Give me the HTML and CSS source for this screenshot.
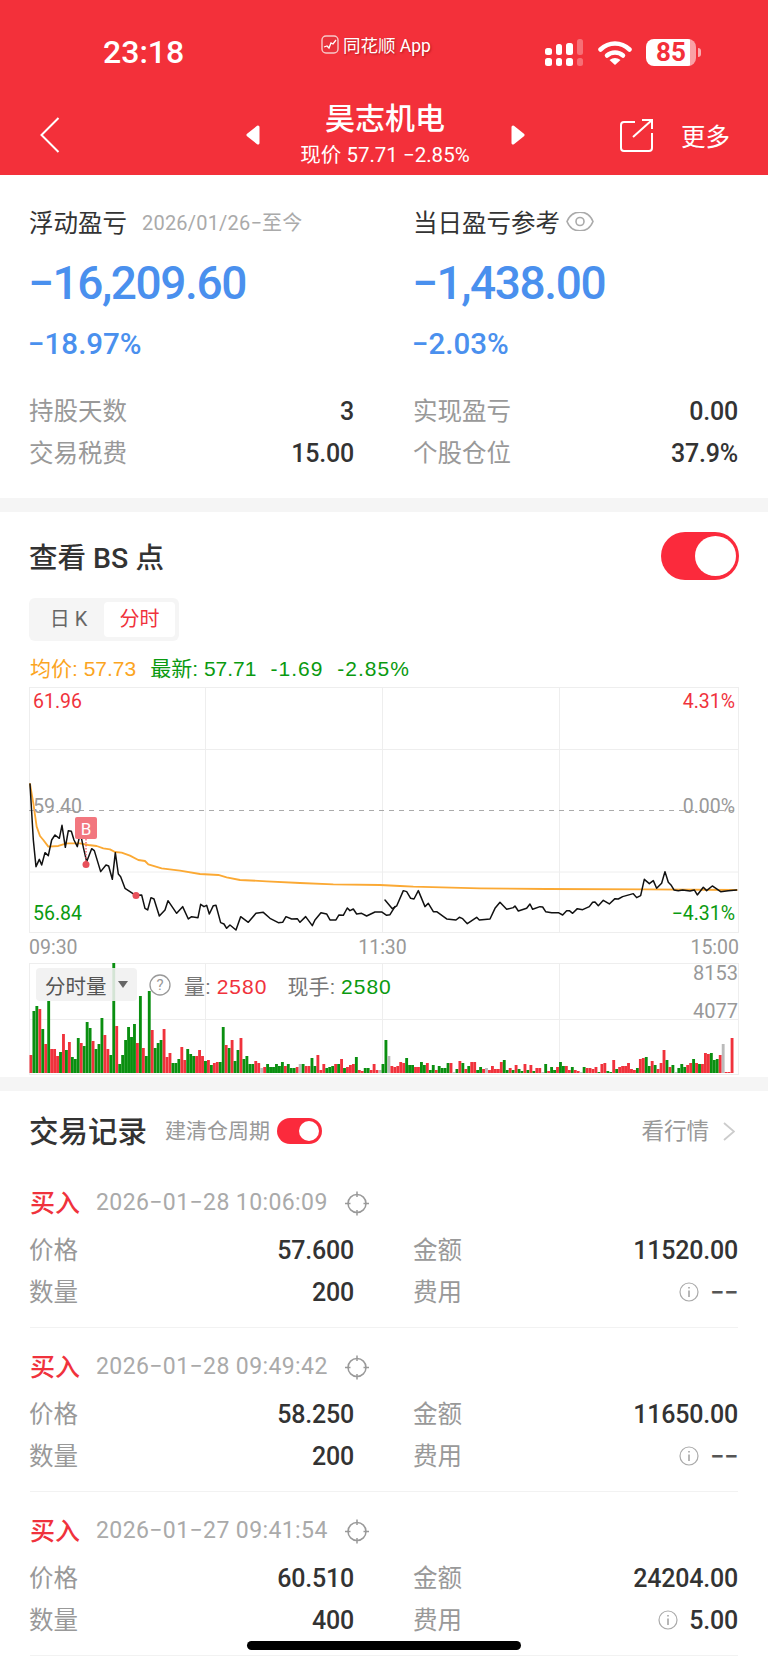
FILE: index.html
```html
<!DOCTYPE html>
<html lang="zh-CN">
<head>
    <meta charset="UTF-8">
    <meta name="viewport" content="width=device-width, initial-scale=1.0">
    <title>昊志机电</title>
    <link rel="stylesheet" href="styles.css">
</head>
<body>
<svg class="defs" width="0" height="0">
    <symbol id="icon-target" viewBox="0 0 24 25">
        <circle cx="12" cy="12.5" r="9" fill="none" stroke="#999" stroke-width="1.5"/>
        <path d="M12 0.5V6M12 19V24.5M0 12.5H5.5M18.5 12.5H24" fill="none" stroke="#999" stroke-width="1.5"/>
    </symbol>
    <symbol id="icon-info" viewBox="0 0 20 20">
        <circle cx="10" cy="10" r="9" fill="none" stroke="#aaa" stroke-width="1.2"/>
        <path d="M10 8.5V15M10 5V6.5" fill="none" stroke="#999" stroke-width="1.4"/>
    </symbol>
</svg>

<div class="page">
    <header class="top">
        <div class="status">
            <span class="clock">23:18</span>
            <span class="app-label">
                <svg class="app-icon" width="18" height="19" viewBox="0 0 18 19">
                    <rect x="1" y="1" width="16" height="17" rx="4" fill="#e8323c" stroke="#f8c8c8" stroke-width="1.4"/>
                    <path d="M3 12L6 11L8 13L10 8L12 9L15 5" fill="none" stroke="#fff" stroke-width="1.3"/>
                </svg>
                同花顺 App
            </span>
            <div class="status-icons">
                <div class="signal">
                    <div class="sig-col"><i class="s1"></i><i></i></div>
                    <div class="sig-col"><i class="s2"></i><i></i></div>
                    <div class="sig-col"><i class="s3"></i><i></i></div>
                    <div class="sig-col faded"><i class="s4"></i><i></i></div>
                </div>
                <svg class="wifi" width="34" height="25" viewBox="0 0 34 25">
                    <path d="M2.5 9.5C11 1.5 23 1.5 31.5 9.5" fill="none" stroke="#fff" stroke-width="4.5" stroke-linecap="round"/>
                    <path d="M9 15.5C13.5 11.5 20.5 11.5 25 15.5" fill="none" stroke="#fff" stroke-width="4.5" stroke-linecap="round"/>
                    <path d="M17 25L11.5 20Q17 16 22.5 20Z" fill="#fff"/>
                </svg>
                <div class="battery">85</div>
                <span class="battery-nub"></span>
            </div>
        </div>
        <div class="nav">
            <svg class="back" width="20" height="36" viewBox="0 0 20 36">
                <path d="M18.5 1L1.5 18L18.5 35" fill="none" stroke="#fff" stroke-width="2"/>
            </svg>
            <div class="nav-mid">
                <svg class="tri" width="14" height="20" viewBox="0 0 14 20"><path d="M12 2L2 10L12 18Z" fill="#fff" stroke="#fff" stroke-width="3" stroke-linejoin="round"/></svg>
                <div class="nav-title">
                    <div class="stock-name">昊志机电</div>
                    <div class="stock-price">现价 57.71 −2.85%</div>
                </div>
                <svg class="tri" width="14" height="20" viewBox="0 0 14 20"><path d="M2 2L12 10L2 18Z" fill="#fff" stroke="#fff" stroke-width="3" stroke-linejoin="round"/></svg>
            </div>
            <div class="nav-right">
                <svg width="33" height="33" viewBox="0 0 33 33">
                    <path d="M15 3H4Q1 3 1 6V29Q1 32 4 32H29Q32 32 32 29V14" fill="none" stroke="#fff" stroke-width="2"/>
                    <path d="M13 18L32 1M22 1H32V10" fill="none" stroke="#fff" stroke-width="2"/>
                </svg>
                <span class="more">更多</span>
            </div>
        </div>
    </header>

    <section class="summary">
        <div class="summary-col">
            <div class="pl-head"><span class="pl-title">浮动盈亏</span><span class="pl-date">2026/01/26−至今</span></div>
            <div class="pl-big">−16,209.60</div>
            <div class="pl-pct">−18.97%</div>
            <div class="kv-list">
                <div class="kv"><span class="k">持股天数</span><span class="v">3</span></div>
                <div class="kv"><span class="k">交易税费</span><span class="v">15.00</span></div>
            </div>
        </div>
        <div class="summary-col">
            <div class="pl-head">
                <span class="pl-title">当日盈亏参考</span>
                <svg class="eye" width="28" height="19" viewBox="0 0 28 19">
                    <path d="M1 9.5C6 -3 22 -3 27 9.5C22 22 6 22 1 9.5Z" fill="none" stroke="#aaa" stroke-width="1.6"/>
                    <circle cx="14" cy="9.5" r="4" fill="none" stroke="#aaa" stroke-width="1.6"/>
                </svg>
            </div>
            <div class="pl-big">−1,438.00</div>
            <div class="pl-pct">−2.03%</div>
            <div class="kv-list">
                <div class="kv"><span class="k">实现盈亏</span><span class="v">0.00</span></div>
                <div class="kv"><span class="k">个股仓位</span><span class="v">37.9%</span></div>
            </div>
        </div>
    </section>

    <section class="bs">
        <div class="bs-head">
            <span class="bs-title">查看 BS 点</span>
            <div class="toggle toggle-big"><span class="knob"></span></div>
        </div>
        <div class="tabs">
            <span class="tab">日 K</span>
            <span class="tab tab-on">分时</span>
        </div>
        <div class="legend">
            <span class="orange">均价: 57.73</span>
            <span class="green">最新: 57.71</span>
            <span class="green wide">-1.69</span>
            <span class="green wide">-2.85%</span>
        </div>

        <div class="price-chart">
            <svg class="chart-svg" width="710" height="247" viewBox="29 687 710 247">
                <rect x="29.5" y="687.5" width="709" height="245" fill="#fff" stroke="#eee"/>
                <path d="M29 749.5H739M29 872H739M205.5 687V933M382.5 687V933M559.5 687V933" fill="none" stroke="#eee"/>
                <path d="M29 810.5H739" fill="none" stroke="#aaa" stroke-dasharray="5 5"/>
                <g fill="none" stroke-linejoin="round" stroke-linecap="round">
                    <g transform="translate(0 760) scale(.3333)">
                        <polyline stroke="#fba934" stroke-width="5.5" points="90,72 100,130 110,200 120,228 130,240 145,260 175,258 200,250 240,250 265,255 290,258 310,265 330,268 345,276 365,278 390,287 415,300 435,303 445,313 485,325 540,332 600,342 655,345 680,352 720,360 800,364 900,369 1000,373 1140,375 1200,378"/>
                    </g>
                    <g transform="translate(380 680) scale(.3333)">
                        <polyline stroke="#fba934" stroke-width="5.5" points="60,618 100,620 300,625 500,627 800,628 1070,630"/>
                    </g>
                    <g transform="translate(0 760) scale(.3333)">
                        <polyline stroke="#111" stroke-width="4.5" points="90,72 100,240 108,320 118,298 125,315 135,278 145,287 155,240 165,225 178,235 186,196 196,262 205,212 214,214 222,240 232,260 241,218 250,262 260,305 275,266 283,272 302,335 318,315 326,318 337,358 346,278 355,342 362,350 375,385 390,395 407,406 425,405 435,445 443,450 453,413 462,417 478,468 495,450 504,422 530,460 548,440 565,477 575,470 594,473 602,433 612,440 620,436 628,462 640,437 648,436 662,488 672,492 680,505 690,495 708,510 722,470 745,487 768,460 790,457 810,475 835,488 848,487 858,470 875,477 892,476 900,487 917,470 937,497 945,480 963,458 980,462 990,480 1008,480 1017,465 1030,466 1042,444 1050,452 1060,447 1070,462 1085,460 1100,468 1125,456 1145,456 1160,466 1170,464 1185,440"/>
                    </g>
                    <g transform="translate(380 680) scale(.3333)">
                        <polyline stroke="#111" stroke-width="4.5" points="15,660 37,686 50,678 70,632 80,635 92,655 102,657 115,632 135,680 145,670 160,695 170,695 200,717 228,720 238,712 248,716 262,731 290,712 298,720 330,717 345,685 360,667 380,688 400,683 405,678 415,693 440,685 450,672 458,688 480,680 488,681 497,695 515,698 535,698 548,705 560,692 568,692 578,700 592,686 608,689 628,680 638,667 645,666 655,677 670,661 688,672 705,656 715,657 728,650 760,641 770,653 782,647 793,598 808,611 820,602 830,625 845,610 855,575 865,607 873,615 882,630 895,632 908,630 930,633 943,630 952,645 970,622 980,632 997,618 1022,635 1045,632 1070,630"/>
                    </g>
                </g>
                <path d="M86 839V862" fill="none" stroke="#ef5560" stroke-width="1.3" stroke-dasharray="1.5 1.5"/>
                <circle cx="86" cy="864.5" r="3.5" fill="#e8505a"/>
                <circle cx="136" cy="895.5" r="3.5" fill="#e8505a"/>
                <rect x="75" y="817" width="22" height="22" rx="2" fill="#f2777f"/>
                <text x="86" y="835" class="b-text">B</text>
            </svg>
            <span class="axis-label red tl">61.96</span>
            <span class="axis-label red tr">4.31%</span>
            <span class="axis-label grey ml">59.40</span>
            <span class="axis-label grey mr">0.00%</span>
            <span class="axis-label green bl">56.84</span>
            <span class="axis-label green br">−4.31%</span>
        </div>
        <div class="time-axis"><span>09:30</span><span class="mid-time">11:30</span><span>15:00</span></div>

        <div class="vol-chart">
            <svg class="chart-svg" width="710" height="114" viewBox="29 963 710 114">
                <rect x="29.5" y="963.5" width="709" height="111" fill="#fff" stroke="#eee"/>
                <path d="M29 1019.5H739M205.5 963V1075M382.5 963V1075M559.5 963V1075" fill="none" stroke="#eee"/>
                <g id="vol-bars"></g>
            </svg>
            <div class="vol-bar">
                <div class="vol-btn">分时量<span class="caret"></span></div>
                <svg class="help" width="22" height="22" viewBox="0 0 22 22">
                    <circle cx="11" cy="11" r="10" fill="#fff" stroke="#999" stroke-width="1.3"/>
                    <text x="11" y="16" class="help-text">?</text>
                </svg>
                <span class="vol-text">量: <span class="red">2580</span></span>
                <span class="vol-text">现手: <span class="green">2580</span></span>
            </div>
            <span class="axis-label grey vol-top">8153</span>
            <span class="axis-label grey vol-mid">4077</span>
        </div>
    </section>

    <section class="records">
        <div class="rec-head">
            <span class="rec-title">交易记录</span>
            <span class="rec-sub">建清仓周期</span>
            <div class="toggle toggle-small"><span class="knob"></span></div>
            <span class="rec-link">看行情</span>
            <svg width="12" height="19" viewBox="0 0 12 19"><path d="M1 1L11 9.5L1 18" fill="none" stroke="#ccc" stroke-width="1.8"/></svg>
        </div>

        <div class="record">
            <div class="rec-time">
                <span class="buy">买入</span><span class="rec-date">2026−01−28 10:06:09</span>
                <svg class="target" width="24" height="25"><use href="#icon-target"/></svg>
            </div>
            <div class="rec-grid">
                <div class="kv"><span class="k">价格</span><span class="v">57.600</span></div>
                <div class="kv"><span class="k">金额</span><span class="v">11520.00</span></div>
                <div class="kv"><span class="k">数量</span><span class="v">200</span></div>
                <div class="kv"><span class="k">费用</span><span class="v fee"><svg width="20" height="20"><use href="#icon-info"/></svg><span class="dash">−−</span></span></div>
            </div>
        </div>

        <div class="record">
            <div class="rec-time">
                <span class="buy">买入</span><span class="rec-date">2026−01−28 09:49:42</span>
                <svg class="target" width="24" height="25"><use href="#icon-target"/></svg>
            </div>
            <div class="rec-grid">
                <div class="kv"><span class="k">价格</span><span class="v">58.250</span></div>
                <div class="kv"><span class="k">金额</span><span class="v">11650.00</span></div>
                <div class="kv"><span class="k">数量</span><span class="v">200</span></div>
                <div class="kv"><span class="k">费用</span><span class="v fee"><svg width="20" height="20"><use href="#icon-info"/></svg><span class="dash">−−</span></span></div>
            </div>
        </div>

        <div class="record">
            <div class="rec-time">
                <span class="buy">买入</span><span class="rec-date">2026−01−27 09:41:54</span>
                <svg class="target" width="24" height="25"><use href="#icon-target"/></svg>
            </div>
            <div class="rec-grid">
                <div class="kv"><span class="k">价格</span><span class="v">60.510</span></div>
                <div class="kv"><span class="k">金额</span><span class="v">24204.00</span></div>
                <div class="kv"><span class="k">数量</span><span class="v">400</span></div>
                <div class="kv"><span class="k">费用</span><span class="v fee"><svg width="20" height="20"><use href="#icon-info"/></svg><span>5.00</span></span></div>
            </div>
        </div>
    </section>

    <div class="home-bar"></div>
</div>
<script src="chart.js"></script>
</body>
</html>
```

FILE: styles.css
```css
* {
    box-sizing: border-box;
}

html, body {
    margin: 0;
    padding: 0;
    height: 1665px;
    overflow: hidden;
    background-color: #fff;
}

body {
    font-family: Roboto, "Noto Sans CJK SC", sans-serif;
    color: #333;
}

.defs {
    position: absolute;
}

.page {
    position: relative;
    width: 768px;
    height: 1665px;
    overflow: hidden;
}

.red { color: #f0323c; }
.green { color: #0a9a10; }
.orange { color: #fba51f; }
.grey { color: #999; }

/* header */
.top {
    background-color: #f3303a;
    color: #fff;
    height: 175px;
}

.status {
    display: flex;
    align-items: center;
    height: 104px;
    padding-left: 103px;
}

.clock {
    font-size: 32px;
    font-weight: 500;
    width: 218px;
}

.app-label {
    display: flex;
    align-items: center;
    gap: 4px;
    font-size: 17.5px;
    margin-bottom: 16px;
    width: 224px;
    text-shadow: 1px 1px 2px rgba(120, 0, 0, 0.5);
}

.status-icons {
    display: flex;
    align-items: center;
}

.signal {
    display: flex;
    gap: 4px;
    height: 27px;
    align-items: flex-end;
}

.sig-col {
    display: flex;
    flex-direction: column;
    gap: 3px;
    width: 6.5px;
}

.sig-col.faded {
    opacity: 0.3;
}

.sig-col i {
    display: block;
    height: 8px;
    background-color: #fff;
    border-radius: 2.5px;
}

.sig-col i.s1 { height: 7px; }
.sig-col i.s2 { height: 11px; }
.sig-col i.s3 { height: 12px; }
.sig-col i.s4 { height: 16px; }

.wifi {
    margin-left: 15px;
}

.battery {
    width: 50px;
    height: 27px;
    margin-left: 14px;
    border-radius: 8px;
    background: linear-gradient(90deg, #fff 88%, rgba(255, 255, 255, 0.55) 88%);
    color: #f3303a;
    font-size: 26px;
    font-weight: 700;
    line-height: 27px;
    padding-left: 10px;
}

.battery-nub {
    width: 3px;
    height: 9px;
    margin-left: 2px;
    background-color: rgba(255, 255, 255, 0.6);
    border-radius: 0 3px 3px 0;
}

.nav {
    display: grid;
    grid-template-columns: 1fr 279px 1fr;
    align-items: center;
    height: 62px;
    padding: 0 38px 0 40px;
}

.nav-mid {
    display: flex;
    align-items: center;
    justify-content: space-between;
}

.nav-title {
    text-align: center;
    align-self: flex-start;
}

.stock-name {
    font-size: 30px;
    line-height: 30px;
    font-weight: 500;
}

.stock-price {
    font-size: 20.5px;
    line-height: 22px;
    margin-top: 10px;
}

.nav-right {
    display: flex;
    align-items: center;
    justify-content: flex-end;
    gap: 28px;
}

.more {
    font-size: 24.5px;
}

/* summary */
.summary {
    display: grid;
    grid-template-columns: 324px 324px;
    column-gap: 60px;
    padding: 31px 30px 24px;
    border-bottom: 14px solid #f5f5f5;
    height: 337px;
}

.pl-head {
    display: flex;
    align-items: center;
    height: 30px;
}

.pl-title {
    font-size: 24.5px;
    margin-left: -1px;
}

.pl-date {
    font-size: 20px;
    letter-spacing: 0.2px;
    color: #aaa;
    margin-left: 15px;
}

.eye {
    margin-left: 6px;
}

.pl-big {
    color: #4a90ee;
    font-size: 46px;
    font-weight: 500;
    line-height: 50px;
    letter-spacing: -1.4px;
    margin: 22px 0 0 -2px;
}

.pl-pct {
    color: #4a90ee;
    font-size: 29.5px;
    font-weight: 500;
    line-height: 30px;
    margin: 21px 0 0 -2px;
}

.kv-list {
    margin-top: 31px;
}

.kv {
    display: flex;
    justify-content: space-between;
    align-items: center;
    height: 42px;
}

.k {
    font-size: 24.5px;
    color: #999;
    margin-bottom: 3px;
    margin-left: -1px;
}

.v {
    font-size: 25px;
    font-weight: 500;
    letter-spacing: -0.2px;
    color: #333;
}

/* BS chart */
.bs {
    padding: 20px 29px 0;
    height: 579px;
    border-bottom: 14px solid #f5f5f5;
}

.bs-head {
    display: flex;
    align-items: center;
    justify-content: space-between;
    height: 47px;
}

.bs-title {
    font-size: 28.5px;
    font-weight: 500;
}

.toggle {
    display: flex;
    justify-content: flex-end;
    align-items: center;
    background-color: #fb2a3c;
    padding-right: 3px;
}

.toggle .knob {
    display: block;
    background-color: #fff;
    border-radius: 50%;
}

.toggle-big {
    width: 78px;
    height: 48px;
    border-radius: 24px;
}

.toggle-big .knob {
    width: 41px;
    height: 40px;
}

.toggle-small {
    width: 45px;
    height: 26px;
    border-radius: 13px;
    margin-left: 7px;
}

.toggle-small .knob {
    width: 20px;
    height: 20px;
}

.tabs {
    display: flex;
    align-items: center;
    width: 150px;
    height: 43px;
    margin-top: 19px;
    padding-left: 4px;
    background-color: #f5f5f5;
    border-radius: 6px;
    font-size: 20px;
}

.tab {
    display: block;
    width: 71px;
    height: 35px;
    line-height: 35px;
    text-align: center;
    color: #666;
}

.tab-on {
    background-color: #fff;
    border-radius: 4px;
    color: #f0323c;
}

.legend {
    display: flex;
    gap: 14px;
    height: 24px;
    line-height: 24px;
    margin-top: 16px;
    margin-left: 1px;
    font-family: "Liberation Sans", "Noto Sans CJK SC", sans-serif;
    font-size: 21px;
}

.legend .wide {
    letter-spacing: 1px;
}

.price-chart {
    position: relative;
    height: 247px;
    margin-top: 6px;
}

.chart-svg {
    display: block;
}

.b-text {
    font-size: 17px;
    fill: #fff;
    text-anchor: middle;
}

.axis-label {
    position: absolute;
    font-size: 19.5px;
    line-height: 24px;
}

.tl { left: 4px; top: 3px; }
.tr { right: 4px; top: 3px; }
.ml { left: 4px; top: 108px; }
.mr { right: 4px; top: 108px; }
.bl { left: 4px; top: 215px; }
.br { right: 4px; top: 215px; }

.time-axis {
    position: relative;
    display: flex;
    justify-content: space-between;
    height: 29px;
    padding-top: 2px;
    font-size: 19.5px;
    line-height: 24px;
    color: #999;
}

.mid-time {
    margin-right: 3px;
}

.vol-chart {
    position: relative;
    height: 114px;
}

.vol-bar {
    position: absolute;
    left: 7px;
    top: 5px;
    display: flex;
    align-items: center;
    height: 33px;
}

.vol-btn {
    display: flex;
    align-items: center;
    width: 101px;
    height: 33px;
    padding-left: 9px;
    background-color: rgba(240, 240, 240, 0.88);
    border-radius: 4px;
    font-size: 20.5px;
    color: #555;
}

.caret {
    width: 0;
    height: 0;
    margin-left: 11px;
    border-left: 5px solid transparent;
    border-right: 5px solid transparent;
    border-top: 7px solid #666;
}

.help {
    margin: 0 13px 0 12px;
}

.help-text {
    font-size: 15px;
    fill: #999;
    text-anchor: middle;
}

.vol-text {
    font-family: "Liberation Sans", "Noto Sans CJK SC", sans-serif;
    font-size: 21px;
    color: #777;
    margin-right: 20px;
}

.vol-text span {
    letter-spacing: 1px;
}

.vol-top { right: 1px; top: -2px; font-size: 20px; }
.vol-mid { right: 1px; top: 36px; font-size: 20px; }

/* records */
.records {
    padding: 20px 30px 0;
}

.rec-head {
    display: flex;
    align-items: center;
    height: 40px;
    margin-bottom: 13px;
}

.rec-title {
    font-size: 29.5px;
    font-weight: 500;
    margin: 0 0 4px -1px;
}

.rec-sub {
    font-size: 21px;
    color: #999;
    margin: 0 0 4px 18px;
}

.rec-link {
    font-size: 22.5px;
    color: #999;
    margin: 0 14px 4px auto;
}

.rec-head svg {
    margin-right: 3px;
}

.record {
    height: 164px;
    padding-top: 24px;
    border-bottom: 1px solid #f2f2f2;
}

.rec-time {
    display: flex;
    align-items: center;
    height: 30px;
}

.buy {
    font-size: 25px;
    font-weight: 500;
    color: #f0323c;
    margin-bottom: 5px;
}

.rec-date {
    font-size: 23px;
    letter-spacing: 0.4px;
    color: #aaa;
    margin: 0 0 2px 16px;
}

.target {
    margin-left: 17px;
}

.rec-grid {
    display: grid;
    grid-template-columns: 324px 324px;
    column-gap: 60px;
    margin-top: 11px;
}

.fee {
    display: flex;
    align-items: center;
    gap: 11px;
}

.dash {
    color: #555;
}

.home-bar {
    position: absolute;
    left: 247px;
    top: 1641px;
    width: 274px;
    height: 9px;
    background-color: #000;
    border-radius: 5px;
}
```

FILE: chart.js
```js
// volume bars for the intraday chart: colour letter + height in px
const volume = ('r18 g62 g67 r64 g44 r29 g72 r24 r24 r17 g21 r39 g23 r31 g16 g14 g35 r30 g27 g51 ' +
    'g45 r32 g24 g29 g55 r38 r24 g18 g110 r47 g9 g18 g33 g46 g36 g49 r30 g77 r25 g17 ' +
    'g82 r43 g25 g30 g33 r44 r16 r20 g10 g10 g14 r26 r13 g24 g19 g17 r17 r23 r17 g12 ' +
    'r13 g8 r10 r11 g11 g46 r28 g25 r33 g12 g23 r35 g14 g17 g9 g9 r12 r10 n5 r6 ' +
    'g9 g6 g6 g9 g7 g11 r7 g9 g5 g5 r6 n9 g9 r7 r7 g15 g7 r18 r3 r9 ' +
    'g5 g6 g7 r9 g9 r14 g5 r6 r8 r9 g16 r3 r2 g5 g5 r3 r9 r3 n3 g9 ' +
    'g33 n17 r7 r6 r7 r11 r10 g15 g8 g8 r6 r6 g11 g8 r10 g3 g8 r3 g7 g5 ' +
    'g5 g10 r10 n1 g4 r12 g10 r4 g7 r11 r11 g3 g6 r4 n5 r3 r7 r4 r4 r11 ' +
    'g13 g3 r5 g3 r8 g4 g2 r9 g3 r8 g2 r5 r5 n1 g9 r2 g6 g3 r6 g11 ' +
    'g7 r7 r3 g6 r3 r2 n1 g6 r5 r5 r4 r6 g1 r9 r10 g2 g1 r13 g4 r6 ' +
    'r7 r7 r10 r4 r3 g5 r14 r15 g16 g7 r12 g8 r4 r10 r23 g13 r6 g8 n1 g5 ' +
    'g9 g6 r8 r10 g14 r10 g9 r9 r20 r19 g20 g13 g14 r18 n29 r1 r1 r35').split(' ');

const colours = { r: '#f0323c', g: '#0a8f10', n: '#bbb' };
const group = document.getElementById('vol-bars');
const baseline = 1073;
const step = 710 / 240;

volume.forEach(function (item, i) {
    const h = Number(item.slice(1));
    const bar = document.createElementNS('http://www.w3.org/2000/svg', 'rect');
    bar.setAttribute('x', (29.5 + i * step).toFixed(2));
    bar.setAttribute('y', baseline - h);
    bar.setAttribute('width', step - 0.1);
    bar.setAttribute('height', h);
    bar.setAttribute('fill', colours[item[0]]);
    group.appendChild(bar);
});
```
